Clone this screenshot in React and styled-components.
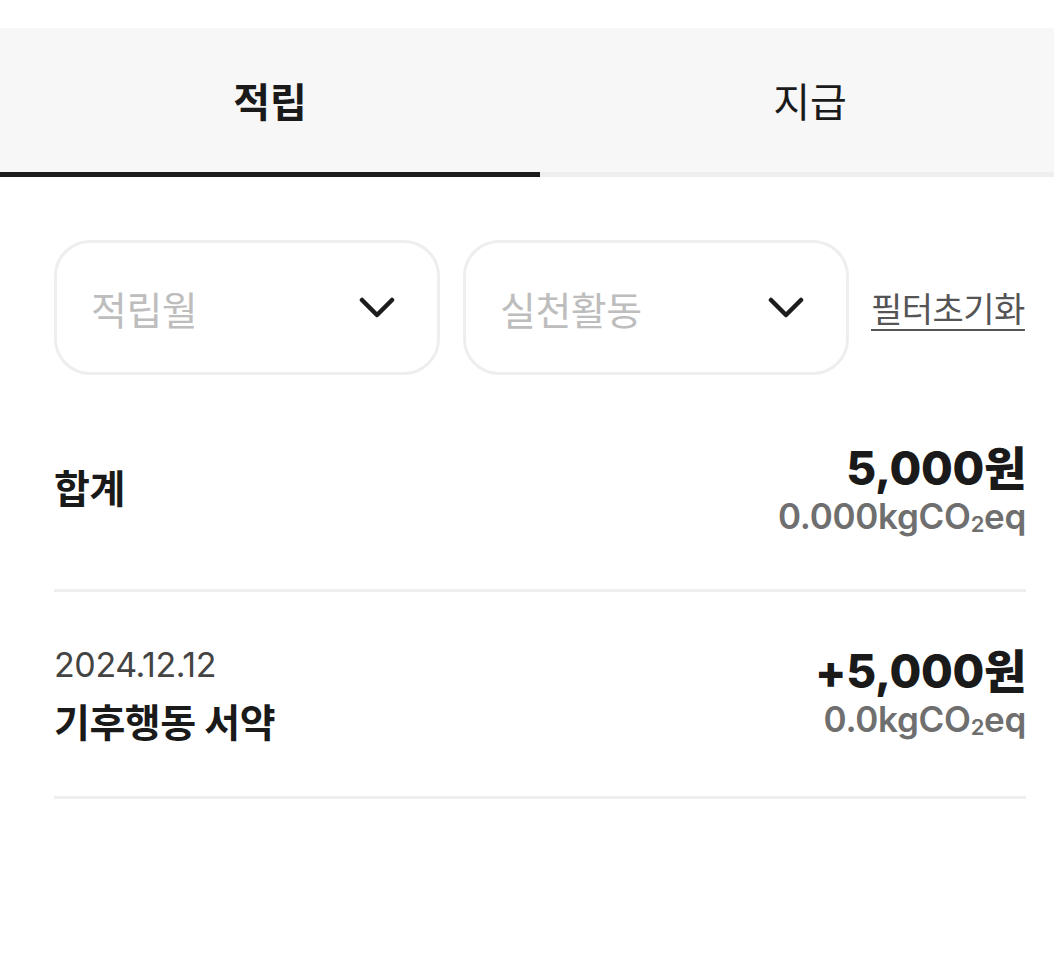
import React, { useState } from "react";
import styled, { createGlobalStyle } from "styled-components";

const GlobalStyle = createGlobalStyle`
  html, body {
    margin: 0;
    padding: 0;
    background: #fff;
    overflow-x: hidden;
  }
  body {
    font-family: Inter, "Noto Sans CJK KR", sans-serif;
    color: #1a1a1a;
  }
`;

const Page = styled.div`
  width: 1080px;
  padding-top: 28px;
`;

const Tabs = styled.div`
  display: flex;
  background: #f7f7f7;
`;

const Tab = styled.button`
  width: 540px;
  height: 149px;
  border: none;
  background: transparent;
  border-bottom: 5px solid ${(p) => (p.$active ? "#1c1c1c" : "#eeeeee")};
  font-family: inherit;
  font-size: 40px;
  font-weight: ${(p) => (p.$active ? 700 : 400)};
  color: #1a1a1a;
  padding: 0;
  cursor: pointer;
`;

const Content = styled.div`
  padding: 63px 54px 0;
`;

const FilterRow = styled.div`
  display: flex;
  align-items: center;
  gap: 23px;
`;

const Select = styled.div`
  width: 386px;
  height: 135px;
  box-sizing: border-box;
  border: 3px solid #eeeeee;
  border-radius: 36px;
  display: flex;
  align-items: center;
  justify-content: space-between;
  padding: 0 42px 0 34px;
`;

const Placeholder = styled.span`
  font-size: 39px;
  color: #bdbdbd;
  letter-spacing: -0.5px;
`;

const ResetLink = styled.a`
  margin-left: -1px;
  font-size: 34px;
  color: #555;
  text-decoration: underline;
  text-underline-offset: 7px;
  text-decoration-thickness: 2px;
  letter-spacing: -0.5px;
  cursor: pointer;
`;

const Row = styled.div`
  display: flex;
  justify-content: space-between;
  align-items: ${(p) => (p.$center ? "center" : "flex-start")};
  padding: ${(p) => p.$pad};
  border-bottom: 3px solid #eeeeee;
`;

const Left = styled.div`
  display: flex;
  flex-direction: column;
`;

const Right = styled.div`
  display: flex;
  flex-direction: column;
  align-items: flex-end;
`;

const Title = styled.span`
  font-size: 39px;
  font-weight: 700;
  color: #1a1a1a;
  letter-spacing: -0.5px;
  line-height: 1.2;
`;

const DateText = styled.span`
  font-size: 34px;
  color: #444;
  letter-spacing: -0.4px;
  line-height: 1.2;
  margin-bottom: 14px;
`;

const Amount = styled.span`
  font-size: 46px;
  font-weight: 800;
  color: #1a1a1a;
  letter-spacing: -0.3px;
  line-height: 1.15;
`;

const Carbon = styled.span`
  font-size: 35px;
  font-weight: 600;
  color: #6f6f6f;
  letter-spacing: -0.3px;
  line-height: 1.2;
  sub {
    font-size: 22px;
    vertical-align: -3px;
    line-height: 0;
  }
`;

const Chevron = () => (
  <svg width="36" height="22" viewBox="0 0 36 22" fill="none">
    <path
      d="M3 3l15 15L33 3"
      stroke="#1c1c1c"
      strokeWidth="4.5"
      strokeLinecap="round"
      strokeLinejoin="round"
    />
  </svg>
);

const items = [{ date: "2024.12.12", title: "기후행동 서약", amount: "+5,000원", carbon: "0.0" }];

export default function App() {
  const [tab, setTab] = useState(0);
  return (
    <Page>
      <GlobalStyle />
      <Tabs>
        <Tab $active={tab === 0} onClick={() => setTab(0)}>
          적립
        </Tab>
        <Tab $active={tab === 1} onClick={() => setTab(1)}>
          지급
        </Tab>
      </Tabs>
      <Content>
        <FilterRow>
          <Select>
            <Placeholder>적립월</Placeholder>
            <Chevron />
          </Select>
          <Select>
            <Placeholder>실천활동</Placeholder>
            <Chevron />
          </Select>
          <ResetLink>필터초기화</ResetLink>
        </FilterRow>
        <Row $center $pad="67px 0 52px">
          <Title>합계</Title>
          <Right>
            <Amount>5,000원</Amount>
            <Carbon>
              0.000kgCO<sub>2</sub>eq
            </Carbon>
          </Right>
        </Row>
        {items.map((it) => (
          <Row key={it.date + it.title} $pad="53px 0 50px">
            <Left>
              <DateText>{it.date}</DateText>
              <Title>{it.title}</Title>
            </Left>
            <Right>
              <Amount>{it.amount}</Amount>
              <Carbon>
                {it.carbon}kgCO<sub>2</sub>eq
              </Carbon>
            </Right>
          </Row>
        ))}
      </Content>
    </Page>
  );
}
